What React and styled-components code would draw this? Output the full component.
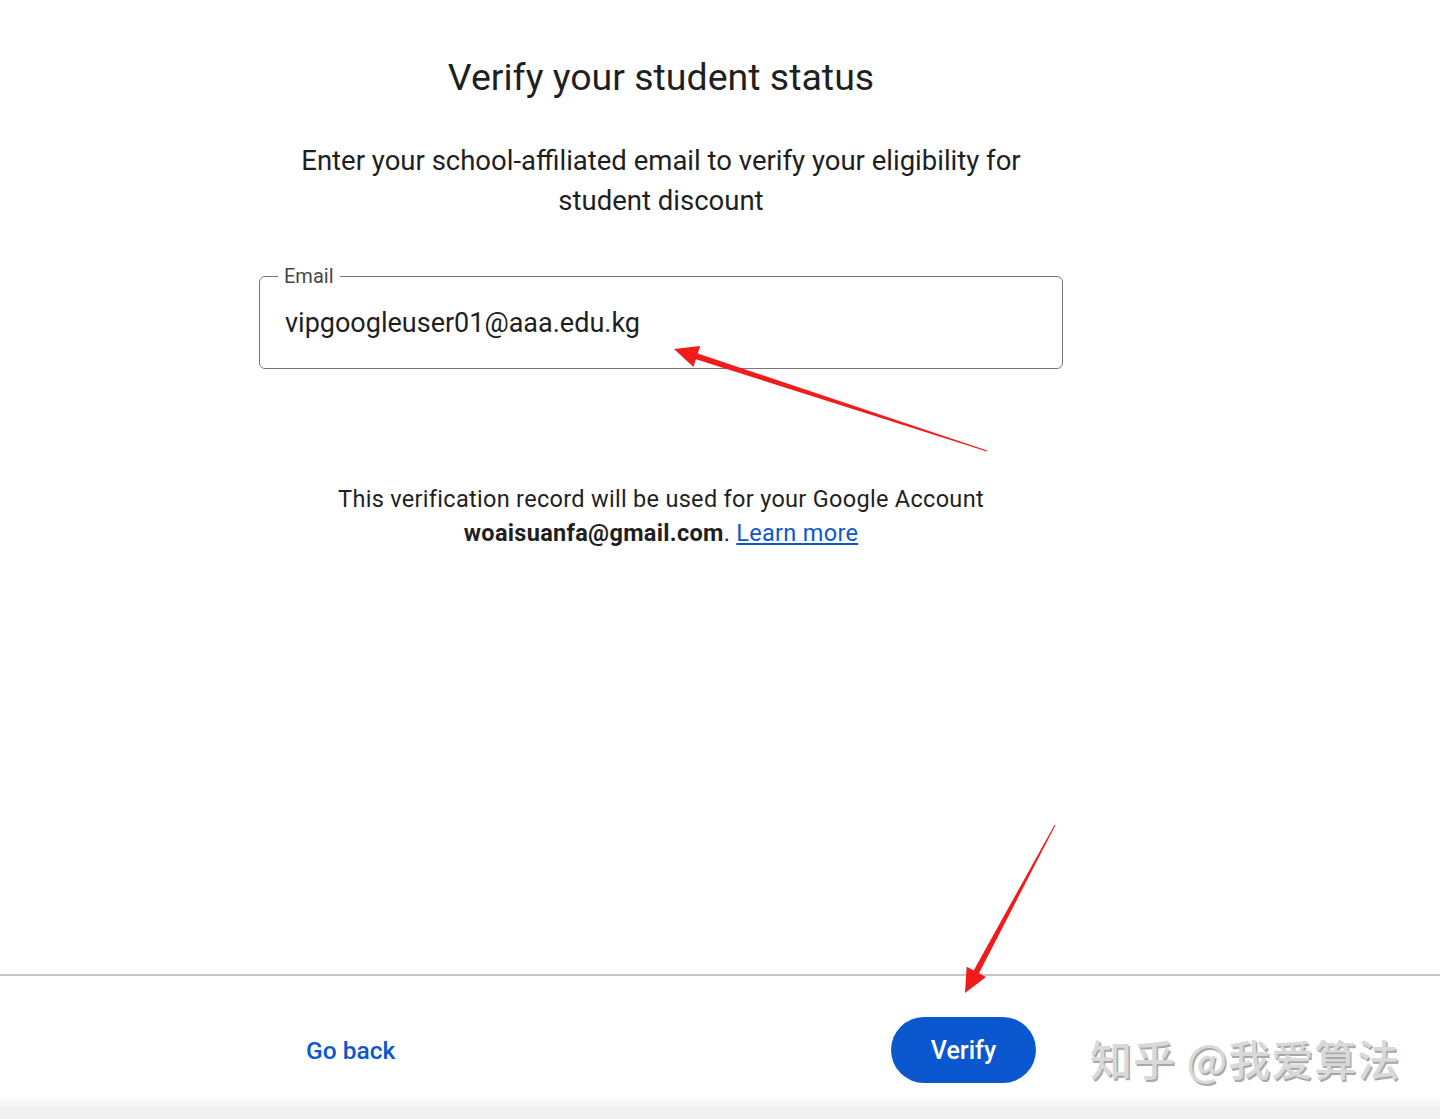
import React from "react";
import styled, { createGlobalStyle } from "styled-components";

const GlobalStyle = createGlobalStyle`
  html, body {
    margin: 0;
    padding: 0;
    background: #fff;
    font-family: Roboto, "Noto Sans", Arial, sans-serif;
    color: #1f1f1f;
  }
`;

const Page = styled.div`
  position: relative;
  width: 1440px;
  height: 1119px;
  display: flex;
  flex-direction: column;
  overflow: hidden;
`;

const Main = styled.main`
  height: 974px;
  flex-shrink: 0;
  display: flex;
  flex-direction: column;
  align-items: center;
  padding-left: 259px;
  width: 804px;
  box-sizing: content-box;
`;

const Title = styled.h1`
  margin: 54px 0 0;
  font-size: 37.5px;
  font-weight: 400;
  line-height: 46px;
  text-align: center;
`;

const Subtitle = styled.p`
  margin: 41px 0 0;
  width: 780px;
  font-size: 27.5px;
  line-height: 40px;
  text-align: center;
`;

const Field = styled.fieldset`
  margin: 44px 0 0;
  width: 804px;
  height: 104px;
  box-sizing: border-box;
  border: 1.5px solid #747775;
  border-radius: 6px;
  padding: 0 25px;

  legend {
    padding: 0 6px;
    margin-left: -7px;
    font-size: 20px;
    line-height: 22px;
    color: #444746;
  }
`;

const Value = styled.div`
  font-size: 27px;
  line-height: 34px;
  margin-top: 19px;
`;

const Note = styled.p`
  margin: 113px 0 0;
  font-size: 23.5px;
  letter-spacing: 0.3px;
  line-height: 34px;
  text-align: center;

  b {
    font-weight: 700;
  }

  a {
    color: #0b57d0;
    text-decoration: underline;
  }
`;

const Footer = styled.footer`
  border-top: 2px solid #c7c7c7;
  flex: 1;
  display: flex;
  align-items: flex-start;
  background: linear-gradient(to bottom, #fff 0, #fff 120px, #f1f1f1 132px);
`;

const FooterRow = styled.div`
  margin-left: 259px;
  width: 804px;
  height: 143px;
  display: flex;
  align-items: center;
  justify-content: space-between;
  padding-top: 5px;
  box-sizing: border-box;
`;

const TextButton = styled.button`
  border: none;
  background: none;
  color: #0b57d0;
  font-family: inherit;
  font-size: 24.5px;
  font-weight: 500;
  padding: 12px 24px;
  margin-left: 23px;
`;

const FilledButton = styled.button`
  border: none;
  background: #0b57d0;
  color: #fff;
  font-family: inherit;
  font-size: 25px;
  font-weight: 500;
  width: 145px;
  height: 66px;
  border-radius: 33px;
  margin-right: 27px;
`;

const Watermark = styled.div`
  position: absolute;
  left: 1090px;
  top: 1027px;
  font-family: "Noto Sans CJK SC", sans-serif;
  font-size: 42px;
  font-weight: 500;
  color: #d9d9d9;
  letter-spacing: 1px;
  text-shadow: 1.5px 1.5px 0 #a8a8a8;
  white-space: nowrap;
`;

const Overlay = styled.svg`
  position: absolute;
  left: 0;
  top: 0;
  pointer-events: none;
`;

const Arrow = ({ x1, y1, x2, y2 }) => {
  const dx = x2 - x1;
  const dy = y2 - y1;
  const len = Math.hypot(dx, dy);
  const ux = dx / len;
  const uy = dy / len;
  const nx = -uy;
  const ny = ux;
  const headL = 24;
  const headW = 11;
  const bx = x2 - ux * headL;
  const by = y2 - uy * headL;
  const shaft = 3;
  const pts = [
    [x1 + nx * 0.5, y1 + ny * 0.5],
    [bx + nx * shaft, by + ny * shaft],
    [bx + nx * headW, by + ny * headW],
    [x2, y2],
    [bx - nx * headW, by - ny * headW],
    [bx - nx * shaft, by - ny * shaft],
    [x1 - nx * 0.5, y1 - ny * 0.5],
  ];
  return <polygon points={pts.map((p) => p.join(",")).join(" ")} fill="#f21b1b" />;
};

export default function App() {
  return (
    <Page>
      <GlobalStyle />
      <Main>
        <Title>Verify your student status</Title>
        <Subtitle>
          Enter your school-affiliated email to verify your eligibility for
          student discount
        </Subtitle>
        <Field>
          <legend>Email</legend>
          <Value>vipgoogleuser01@aaa.edu.kg</Value>
        </Field>
        <Note>
          This verification record will be used for your Google Account
          <br />
          <b>woaisuanfa@gmail.com</b>. <a href="#">Learn more</a>
        </Note>
      </Main>
      <Footer>
        <FooterRow>
          <TextButton>Go back</TextButton>
          <FilledButton>Verify</FilledButton>
        </FooterRow>
      </Footer>
      <Watermark>知乎 @我爱算法</Watermark>
      <Overlay width="1440" height="1119" viewBox="0 0 1440 1119">
        <Arrow x1={987} y1={451} x2={674} y2={349} />
        <Arrow x1={1055} y1={825} x2={965} y2={993} />
      </Overlay>
    </Page>
  );
}
